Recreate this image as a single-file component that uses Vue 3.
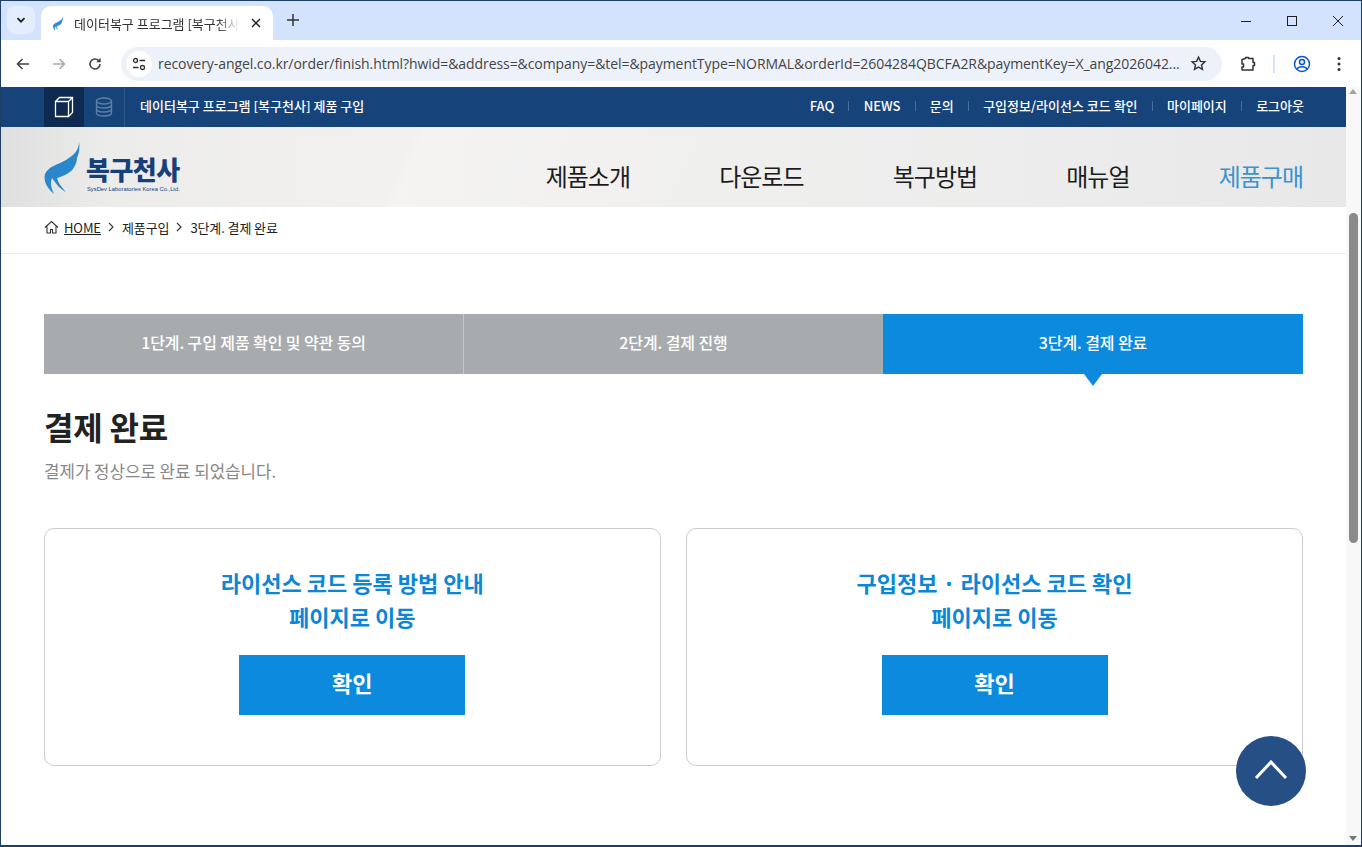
<script setup>
const topLinks = ['FAQ', 'NEWS', '문의', '구입정보/라이선스 코드 확인', '마이페이지', '로그아웃']
const navItems = [
  { label: '제품소개' },
  { label: '다운로드' },
  { label: '복구방법' },
  { label: '매뉴얼' },
  { label: '제품구매', active: true }
]
const steps = [
  { label: '1단계. 구입 제품 확인 및 약관 동의' },
  { label: '2단계. 결제 진행' },
  { label: '3단계. 결제 완료', active: true }
]
const cards = [
  { lines: ['라이선스 코드 등록 방법 안내', '페이지로 이동'] },
  { lines: ['구입정보 · 라이선스 코드 확인', '페이지로 이동'] }
]
const url = 'recovery-angel.co.kr/order/finish.html?hwid=&address=&company=&tel=&paymentType=NORMAL&orderId=2604284QBCFA2R&paymentKey=X_ang2026042...'
const wing = 'M35 0C35 8 30 13 22 18C13 23 5 24 1 32C-1 40 4 47 10 52C7 46 6 41 8 36C12 42 16 47 22 50C17 45 14 40 13 36C20 34 26 31 29 27C31 24 33 20 33 16C35 12 36 5 35 0Z'
</script>

<template>
  <div class="window">
    <!-- Browser chrome -->
    <div class="tabstrip">
      <button class="tab-search">
        <svg width="12" height="12" viewBox="0 0 12 12"><path d="M2.500 4.200 6 7.700l3.500-3.500" fill="none" stroke="#1f1f1f" stroke-width="1.800" /></svg>
      </button>
      <div class="tab">
        <svg class="favicon" width="12" height="15" viewBox="0 0 36 52"><path :d="wing" fill="#2b8ccf" /></svg>
        <span class="tab-title">데이터복구 프로그램 [복구천사] 제품 구입</span>
        <svg width="12" height="12" viewBox="0 0 12 12"><path d="M2 2l8 8M10 2l-8 8" stroke="#1f1f1f" stroke-width="1.400" /></svg>
      </div>
      <svg class="new-tab" width="14" height="14" viewBox="0 0 14 14"><path d="M7 1v12M1 7h12" stroke="#333" stroke-width="1.500" /></svg>
      <div class="win-controls">
        <svg width="12" height="12" viewBox="0 0 12 12"><path d="M1 6.500h10" stroke="#1f1f1f" /></svg>
        <svg width="12" height="12" viewBox="0 0 12 12"><rect x="1.500" y="1.500" width="9" height="9" fill="none" stroke="#1f1f1f" /></svg>
        <svg width="12" height="12" viewBox="0 0 12 12"><path d="M1 1l10 10M11 1L1 11" stroke="#1f1f1f" /></svg>
      </div>
    </div>
    <div class="toolbar">
      <svg width="16" height="16" viewBox="0 0 16 16"><path d="M14 8H2.500M7.500 3 2.500 8l5 5" fill="none" stroke="#444" stroke-width="1.600" /></svg>
      <svg class="nav-forward" width="16" height="16" viewBox="0 0 16 16"><path d="M2 8h11.500M8.500 3l5 5-5 5" fill="none" stroke="#a9a9a9" stroke-width="1.600" /></svg>
      <svg class="nav-reload" width="16" height="16" viewBox="0 0 16 16"><path d="M13 8a5 5 0 1 1-1.600-3.700L13 5.800" fill="none" stroke="#444" stroke-width="1.600" /><path d="M13.600 1.800v4.400H9.200z" fill="#444" /></svg>
      <div class="omnibox">
        <span class="tune">
          <svg width="16" height="16" viewBox="0 0 16 16"><circle cx="4.500" cy="4.500" r="2" fill="none" stroke="#333" stroke-width="1.300" /><path d="M8.500 4.500H14M2 11.500h5.500" stroke="#333" stroke-width="1.300" /><circle cx="11.500" cy="11.500" r="2" fill="none" stroke="#333" stroke-width="1.300" /></svg>
        </span>
        <span class="url">{{ url }}</span>
        <svg class="star" width="17" height="17" viewBox="0 0 24 24"><path d="m12 3 2.700 6 6.300.7-4.700 4.300 1.300 6.400L12 17.200 6.400 20.400 7.700 14 3 9.700 9.300 9z" fill="none" stroke="#333" stroke-width="2" /></svg>
      </div>
      <svg class="ext" width="18" height="18" viewBox="0 0 18 18"><path d="M6.500 3.500V2.500h3v1h4.500v4h1.500v3H14v4.500H3v-3h1.500v-3H3v-4.500z" fill="none" stroke="#333" stroke-width="1.500" stroke-linejoin="round" /></svg>
      <span class="tool-sep"></span>
      <svg class="profile" width="18" height="18" viewBox="0 0 18 18"><circle cx="9" cy="9" r="7.500" fill="none" stroke="#0b57d0" stroke-width="1.500" /><circle cx="9" cy="7" r="2.500" fill="none" stroke="#0b57d0" stroke-width="1.500" /><path d="M4 14c1.500-3 8.500-3 10 0" fill="none" stroke="#0b57d0" stroke-width="1.500" /></svg>
      <svg class="menu" width="4" height="16" viewBox="0 0 4 16"><circle cx="2" cy="2.500" r="1.500" fill="#333" /><circle cx="2" cy="8" r="1.500" fill="#333" /><circle cx="2" cy="13.500" r="1.500" fill="#333" /></svg>
    </div>

    <div class="viewport">
      <div class="page">
        <!-- Top bar -->
        <div class="topbar">
          <div class="container topbar-inner">
            <div class="product-tabs">
              <span class="product-tab on">
                <svg width="20" height="22" viewBox="0 0 20 22"><path d="M1.500 5.500h13v15h-13zM1.500 5.500l4-4h13v15l-4 4M14.500 5.500l4-4" fill="none" stroke="#fff" stroke-width="1.300" /></svg>
              </span>
              <span class="product-tab">
                <svg width="18" height="20" viewBox="0 0 18 20"><ellipse cx="9" cy="4" rx="7.500" ry="3" fill="none" stroke="#5f7fa6" stroke-width="1.400" /><path d="M1.500 4v12c0 1.700 3.400 3 7.500 3s7.500-1.300 7.500-3V4M1.500 8c0 1.700 3.400 3 7.500 3s7.500-1.300 7.500-3M1.500 12c0 1.700 3.400 3 7.500 3s7.500-1.300 7.500-3" fill="none" stroke="#5f7fa6" stroke-width="1.400" /></svg>
              </span>
            </div>
            <span class="topbar-title">데이터복구 프로그램 [복구천사] 제품 구입</span>
            <ul class="top-links">
              <li v-for="link in topLinks" :key="link">{{ link }}</li>
            </ul>
          </div>
        </div>

        <!-- Header -->
        <header class="header">
          <div class="container header-inner">
            <div class="logo">
              <svg class="logo-wing" width="36" height="52" viewBox="0 0 36 52"><path :d="wing" fill="#2a87cc" /></svg>
              <div class="logo-text">
                <strong>복구천사</strong>
                <small>SysDev Laboratories Korea Co.,Ltd.</small>
              </div>
            </div>
            <nav class="nav">
              <a v-for="item in navItems" :key="item.label" :class="{ active: item.active }">{{ item.label }}</a>
            </nav>
          </div>
        </header>

        <!-- Breadcrumb -->
        <div class="breadcrumb">
          <div class="container crumbs">
            <svg class="home" width="15" height="14" viewBox="0 0 15 14"><path d="M1 7.500 7.500 1.500 14 7.500M3 6.500v6.500h3.500V9.500h2V13H12V6.500" fill="none" stroke="#333" stroke-width="1.100" /></svg>
            <u>HOME</u>
            <svg width="8" height="10" viewBox="0 0 8 10"><path d="m2 1 4 4-4 4" fill="none" stroke="#333" stroke-width="1.100" /></svg>
            <span>제품구입</span>
            <svg width="8" height="10" viewBox="0 0 8 10"><path d="m2 1 4 4-4 4" fill="none" stroke="#333" stroke-width="1.100" /></svg>
            <span>3단계. 결제 완료</span>
          </div>
        </div>

        <main class="container content">
          <div class="steps">
            <div v-for="step in steps" :key="step.label" class="step" :class="{ active: step.active }">{{ step.label }}</div>
          </div>

          <h1 class="title">결제 완료</h1>
          <p class="subtitle">결제가 정상으로 완료 되었습니다.</p>

          <div class="cards">
            <div v-for="card in cards" :key="card.lines[0]" class="card">
              <h2>
                <span v-for="line in card.lines" :key="line">{{ line }}</span>
              </h2>
              <button class="confirm">확인</button>
            </div>
          </div>
        </main>

        <button class="to-top">
          <svg width="34" height="22" viewBox="0 0 34 22"><path d="M2 20 17 4l15 16" fill="none" stroke="#fff" stroke-width="3" /></svg>
        </button>
      </div>

      <div class="scrollbar">
        <i class="arrow up"></i>
        <div class="thumb"></div>
        <i class="arrow down"></i>
      </div>
    </div>
  </div>
</template>

<style scoped>
.window {
  width: 1362px;
  height: 847px;
  box-sizing: border-box;
  border: 1px solid #1d3f66;
  border-bottom-width: 2px;
  display: flex;
  flex-direction: column;
  overflow: hidden;
  background: #fff;
  font-family: "Noto Sans CJK KR", "Noto Sans", sans-serif;
  color: #222;
}

/* Browser chrome */
.tabstrip {
  height: 39px;
  flex: none;
  display: flex;
  align-items: flex-end;
  background: #d3e3fd;
  padding-left: 6px;
}

.tab-search {
  width: 28px;
  height: 28px;
  margin-bottom: 6px;
  border: 0;
  border-radius: 8px;
  background: #e3edfd;
  display: flex;
  align-items: center;
  justify-content: center;
  padding: 0;
}

.tab {
  width: 232px;
  height: 34px;
  box-sizing: border-box;
  margin-left: 6px;
  padding: 0 11px 0 11px;
  background: #fff;
  border-radius: 10px 10px 0 0;
  display: flex;
  align-items: center;
  gap: 10px;
  font-size: 13px;
  color: #333;
}

.tab-title {
  flex: 1;
  min-width: 0;
  white-space: nowrap;
  overflow: hidden;
  -webkit-mask-image: linear-gradient(to right, #000 86%, transparent);
  mask-image: linear-gradient(to right, #000 86%, transparent);
}

.new-tab {
  margin: 0 0 13px 13px;
}

.win-controls {
  margin-left: auto;
  margin-bottom: 13px;
  padding-right: 17px;
  display: flex;
  gap: 34px;
}

.win-controls svg {
  display: block;
}

.toolbar {
  height: 47px;
  flex: none;
  display: flex;
  align-items: center;
  padding-left: 14px;
  background: #fff;
}

.nav-forward {
  margin-left: 20px;
}

.nav-reload {
  margin-left: 20px;
}

.omnibox {
  width: 1101px;
  height: 34px;
  box-sizing: border-box;
  margin-left: 18px;
  padding: 0 15px 0 5px;
  border-radius: 17px;
  background: #edf2fa;
  display: flex;
  align-items: center;
}

.tune {
  width: 26px;
  height: 26px;
  flex: none;
  border-radius: 50%;
  background: #fff;
  display: flex;
  align-items: center;
  justify-content: center;
}

.url {
  margin-left: 6px;
  flex: 1;
  min-width: 0;
  white-space: nowrap;
  font-family: "Open Sans", sans-serif;
  font-size: 14px;
  letter-spacing: -0.07px;
  color: #444;
}

.star {
  flex: none;
  margin-left: 8px;
}

.ext {
  margin-left: 17px;
}

.tool-sep {
  width: 2px;
  height: 18px;
  margin-left: 16px;
  background: #d3e3fd;
}

.profile {
  margin-left: 18px;
}

.menu {
  margin-left: 26px;
}

/* Page */
.viewport {
  flex: 1;
  min-height: 0;
  display: flex;
}

.page {
  flex: 1;
  min-width: 0;
  position: relative;
  overflow: hidden;
}

.container {
  width: 1259px;
  margin-left: 43px;
}

.topbar {
  height: 40px;
  background: #17437b;
}

.topbar-inner {
  height: 100%;
  display: flex;
  align-items: center;
}

.product-tabs {
  display: flex;
  height: 100%;
}

.product-tab {
  width: 40px;
  border-right: 1px solid #2f5788;
  display: flex;
  align-items: center;
  justify-content: center;
}

.product-tab.on {
  background: #0e2a50;
  border-right: 0;
}

.topbar-title {
  margin-left: 15px;
  padding-bottom: 3px;
  font-size: 13px;
  font-weight: 500;
  color: #fff;
}

.top-links {
  margin: 0 -1px 0 auto;
  padding: 0 0 3px;
  list-style: none;
  display: flex;
  font-size: 13px;
  font-weight: 500;
  color: #fff;
}

.top-links li {
  display: flex;
  align-items: center;
}

.top-links li + li::before {
  content: '';
  width: 1px;
  height: 10px;
  margin: 0 14.200px;
  background: #4a6d9a;
}

.header {
  height: 80px;
  background:
    linear-gradient(115deg, transparent 30%, rgba(255, 255, 255, 0.18) 31%, transparent 55%),
    linear-gradient(90deg, #dfdfdf 0%, #ececeb 8%, #f3f1f0 28%, #efefee 55%, #ececec 80%, #e8e8e8 100%);
}

.header-inner {
  height: 100%;
  display: flex;
  align-items: center;
  justify-content: space-between;
}

.logo {
  display: flex;
  align-items: flex-end;
  gap: 6px;
  margin-top: 2px;
}

.logo-text {
  display: flex;
  flex-direction: column;
  color: #17407a;
}

.logo-text strong {
  font-size: 26px;
  font-weight: 900;
  line-height: 34px;
  letter-spacing: -0.5px;
}

.logo-text small {
  padding-left: 1px;
  font-family: "Liberation Sans", sans-serif;
  font-size: 5.800px;
  line-height: 7px;
  white-space: nowrap;
  margin-bottom: 1px;
}

.nav {
  display: flex;
  gap: 89.200px;
  margin-top: 16px;
  font-size: 24px;
  font-weight: 400;
  letter-spacing: -1px;
  color: #1c1c1c;
}

.nav .active {
  color: #3a93cf;
}

.breadcrumb {
  height: 46px;
  border-bottom: 1px solid #eeeeee;
}

.crumbs {
  height: 40px;
  display: flex;
  align-items: center;
  gap: 6px;
  font-size: 13px;
  letter-spacing: -0.1px;
  color: #222;
}

.crumbs .home {
  margin-right: -1px;
}

.crumbs svg + span {
  margin-left: 1px;
}

.content {
  padding-top: 60px;
}

.steps {
  display: grid;
  grid-template-columns: 419px 420px 420px;
}

.step {
  position: relative;
  height: 60px;
  box-sizing: border-box;
  padding-bottom: 4px;
  background: #a7abae;
  display: flex;
  align-items: center;
  justify-content: center;
  font-size: 16px;
  font-weight: 500;
  letter-spacing: -0.1px;
  color: #fff;
}

.step + .step {
  border-left: 1px solid #c4c7c9;
}

.step.active {
  background: #0c8ade;
  border-left: 0;
}

/* small pointer under the current step */
.step.active::after {
  content: '';
  position: absolute;
  left: 50%;
  top: 100%;
  margin-left: -9px;
  border: 9px solid transparent;
  border-bottom: 0;
  border-top: 12px solid #0c8ade;
}

.title {
  margin: 30px 0 0;
  font-size: 32px;
  line-height: 44px;
  font-weight: 700;
  letter-spacing: -0.2px;
  color: #222;
}

.subtitle {
  margin: 11px 0 0;
  font-size: 16.800px;
  line-height: 24px;
  color: #888;
}

.cards {
  margin-top: 45px;
  display: grid;
  grid-template-columns: 616.500px 617px;
  column-gap: 25.500px;
}

.card {
  height: 238px;
  box-sizing: border-box;
  border: 1px solid #cccccc;
  border-radius: 10px;
  padding-top: 36px;
  display: flex;
  flex-direction: column;
  align-items: center;
}

.card h2 {
  margin: 0;
  display: flex;
  flex-direction: column;
  align-items: center;
  font-size: 22px;
  line-height: 34px;
  font-weight: 700;
  color: #0c86d6;
}

.confirm {
  width: 226px;
  height: 60px;
  margin-top: 22px;
  padding: 0 0 6px;
  border: 0;
  background: #0c8ade;
  color: #fff;
  font-family: inherit;
  font-size: 22px;
  font-weight: 700;
}

.to-top {
  position: absolute;
  left: 1235px;
  top: 649px;
  width: 70px;
  height: 70px;
  padding: 0 0 4px;
  border: 0;
  border-radius: 50%;
  background: #254f85;
  display: flex;
  align-items: center;
  justify-content: center;
}

.scrollbar {
  width: 15px;
  flex: none;
  background: #f8f8f8;
  position: relative;
}

.thumb {
  position: absolute;
  left: 3px;
  top: 126px;
  width: 9px;
  height: 330px;
  border-radius: 5px;
  background: #8b8b8b;
}

.arrow {
  position: absolute;
  left: 3px;
  border: 4.500px solid transparent;
}

.arrow.up {
  top: 2px;
  border-top: 0;
  border-bottom: 5px solid #a3a3a3;
}

.arrow.down {
  bottom: 4px;
  border-bottom: 0;
  border-top: 5px solid #777;
}
</style>

<style>
html,
body {
  margin: 0;
  overflow: hidden;
}
</style>
